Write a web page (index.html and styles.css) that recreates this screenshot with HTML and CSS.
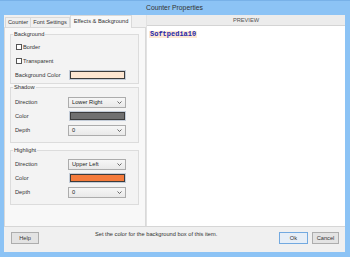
FILE: index.html
```
<!DOCTYPE html>
<html>
<head>
<meta charset="utf-8">
<link rel="stylesheet" href="styles.css">
</head>
<body>
<div class="window">
  <div class="titlebar">Counter Properties</div>
  <div class="client">
    <div class="main">
      <div class="tabs-area">
        <div class="tabstrip">
          <div class="tab">Counter</div>
          <div class="tab">Font Settings</div>
          <div class="tab active">Effects &amp; Background</div>
        </div>
        <div class="panel">
          <fieldset class="group g-bg">
            <legend>Background</legend>
            <div class="row"><span class="checkbox"></span><span>Border</span></div>
            <div class="row"><span class="checkbox"></span><span>Transparent</span></div>
            <div class="row"><span class="label">Background Color</span><span class="swatch peach"></span></div>
          </fieldset>
          <fieldset class="group g-shadow">
            <legend>Shadow</legend>
            <div class="row"><span class="label">Direction</span>
              <div class="select"><span>Lower Right</span><svg class="chev" width="5" height="3" viewBox="0 0 5 3"><path d="M0.5 0.5 L2.5 2.5 L4.5 0.5" fill="none" stroke="#444" stroke-width="0.8"/></svg></div>
            </div>
            <div class="row"><span class="label">Color</span><span class="swatch gray"></span></div>
            <div class="row"><span class="label">Depth</span>
              <div class="select"><span>0</span><svg class="chev" width="5" height="3" viewBox="0 0 5 3"><path d="M0.5 0.5 L2.5 2.5 L4.5 0.5" fill="none" stroke="#444" stroke-width="0.8"/></svg></div>
            </div>
          </fieldset>
          <fieldset class="group g-high">
            <legend>Highlight</legend>
            <div class="row"><span class="label">Direction</span>
              <div class="select"><span>Upper Left</span><svg class="chev" width="5" height="3" viewBox="0 0 5 3"><path d="M0.5 0.5 L2.5 2.5 L4.5 0.5" fill="none" stroke="#444" stroke-width="0.8"/></svg></div>
            </div>
            <div class="row"><span class="label">Color</span><span class="swatch orange"></span></div>
            <div class="row"><span class="label">Depth</span>
              <div class="select"><span>0</span><svg class="chev" width="5" height="3" viewBox="0 0 5 3"><path d="M0.5 0.5 L2.5 2.5 L4.5 0.5" fill="none" stroke="#444" stroke-width="0.8"/></svg></div>
            </div>
          </fieldset>
        </div>
      </div>
      <div class="preview">
        <div class="preview-head">PREVIEW</div>
        <div class="preview-body"><span class="sample">Softpedia10</span></div>
      </div>
    </div>
    <div class="bottombar">
      <div class="btn btn-help">Help</div>
      <div class="status">Set the color for the background box of this item.</div>
      <div class="spacer"></div>
      <div class="btn btn-ok">Ok</div>
      <div class="btn btn-cancel">Cancel</div>
    </div>
  </div>
</div>
</body>
</html>
```
FILE: styles.css
```
* { box-sizing: border-box; }
html, body { margin: 0; padding: 0; }
body {
  width: 350px;
  height: 257px;
  overflow: hidden;
  font-family: "Liberation Sans", Arial, sans-serif;
  font-size: 5.7px;
  color: #222;
}
.window {
  width: 350px;
  height: 257px;
  background: #8cc3f5;
  box-shadow: inset 0 1px #78b1e8;
  display: flex;
  flex-direction: column;
  padding: 0 5px 5px 4px;
}
.titlebar {
  height: 15px;
  line-height: 15px;
  text-align: center;
  font-size: 6.8px;
  color: #333;
}
.client {
  flex: 1;
  background: #f0f0f0;
  display: flex;
  flex-direction: column;
}
.main {
  height: 211px;
  display: flex;
}
.tabs-area {
  width: 142px;
  display: flex;
  flex-direction: column;
}
.tabstrip {
  height: 12px;
  display: flex;
  align-items: flex-end;
  padding-left: 1px;
}
.tab {
  height: 10px;
  line-height: 9px;
  padding: 0 2px;
  border: 1px solid #d9d9d9;
  border-bottom: none;
  background: #f0f0f0;
  margin-right: -1px;
  color: #333;
}
.tab.active {
  height: 13px;
  line-height: 10px;
  padding: 0 3px;
  margin: 0 0 -1px 1px;
  background: #f8f8f8;
  position: relative;
  z-index: 1;
}
.panel {
  flex: 1;
  border: 1px solid #d9d9d9;
  border-bottom: none;
  background: #f8f8f8;
}
.group {
  width: 129px;
  min-width: 0;
  margin: 0 0 0 5px;
  padding: 2px 0 1px 4px;
  border: 1px solid #dcdcdc;
  background: #f3f3f3;
}
.group legend {
  padding: 0 1px;
  margin-left: -2px;
  line-height: 7px;
  height: 7px;
  color: #333;
}
.g-bg { margin-top: 3px; }
.g-shadow { margin-top: 0; padding-top: 4px; padding-bottom: 5px; }
.g-high { margin-top: 4px; padding-top: 3px; padding-bottom: 5px; }
.row {
  height: 14px;
  display: flex;
  align-items: center;
  color: #333;
}
.checkbox {
  width: 6px;
  height: 6px;
  border: 1px solid #555;
  background: #fff;
  margin: 0 1px 0 1px;
}
.label { width: 53px; }
.swatch {
  width: 55px;
  height: 8px;
  margin-left: 2px;
  border: 1px solid #3c3c3c;
  box-shadow: 0 0 0 1px #c3ccd8;
}
.peach { background: #fde6d2; }
.gray { background: #707070; }
.orange { background: #f47b3c; }
.select {
  width: 58px;
  height: 11px;
  border: 1px solid #acacac;
  background: linear-gradient(#f6f6f6, #e9e9e9);
  display: flex;
  align-items: center;
  justify-content: space-between;
  padding: 0 3px 0 3px;
  color: #222;
}
.chev { display: block; }
.preview {
  flex: 1;
  display: flex;
  flex-direction: column;
  background: #fff;
  border-left: 1px solid #e2e2e2;
}
.preview-head {
  height: 11px;
  line-height: 10px;
  text-align: center;
  background: #ececec;
  border-bottom: 1px solid #d4d4d4;
  color: #555;
}
.preview-body { padding: 5px 0 0 2px; }
.sample {
  display: inline-block;
  background: #fde8d4;
  color: #2727a8;
  font-family: "Liberation Mono", "Courier New", monospace;
  font-weight: bold;
  font-size: 7px;
  line-height: 7px;
  padding: 0 1px;
}
.bottombar {
  height: 26px;
  border-top: 1px solid #d6d6d6;
  display: flex;
  align-items: flex-start;
  padding: 5px 6px 0 7px;
}
.btn {
  height: 12px;
  line-height: 10px;
  border: 1px solid #adadad;
  background: #e3e3e3;
  text-align: center;
  color: #333;
}
.btn-help { width: 28px; }
.status { margin: -1px 0 0 56px; line-height: 7px; color: #333; }
.spacer { flex: 1; }
.btn-ok { width: 29px; border-color: #72a9e0; background: #e6eef7; }
.btn-cancel { width: 27px; margin-left: 4px; }
```
